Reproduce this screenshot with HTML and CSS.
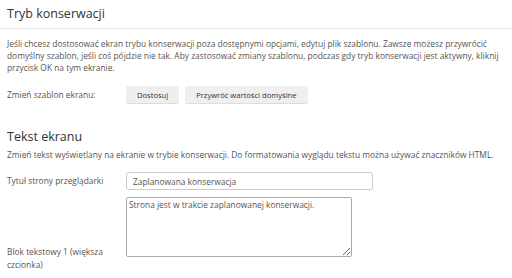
FILE: index.html
```html
<!DOCTYPE html>
<html>
<head>
  <title>Tryb konserwacji</title>
  <link rel="stylesheet" href="styles.css">
</head>
<body>

<div class="naglowek">
  <h1>Tryb konserwacji</h1>
</div>

<div class="sekcja">
  <p class="opis">Jeśli chcesz dostosować ekran trybu konserwacji poza dostępnymi opcjami, edytuj plik szablonu. Zawsze możesz przywrócić domyślny szablon, jeśli coś pójdzie nie tak. Aby zastosować zmiany szablonu, podczas gdy tryb konserwacji jest aktywny, kliknij przycisk OK na tym ekranie.</p>

  <div class="wiersz srodek">
    <label class="etykieta">Zmień szablon ekranu:</label>
    <div class="przyciski">
      <button class="przycisk">Dostosuj</button>
      <button class="przycisk">Przywróć wartości domyślne</button>
    </div>
  </div>
</div>

<div class="sekcja druga">
  <h2>Tekst ekranu</h2>
  <p class="opis krotki">Zmień tekst wyświetlany na ekranie w trybie konserwacji. Do formatowania wyglądu tekstu można używać znaczników HTML.</p>

  <div class="wiersz srodek">
    <label class="etykieta" for="tytul">Tytuł strony przeglądarki</label>
    <input type="text" id="tytul" class="pole" value="Zaplanowana konserwacja">
  </div>

  <div class="wiersz">
    <label class="etykieta nisko" for="blok1">Blok tekstowy 1 (większa czcionka)</label>
    <textarea id="blok1" class="obszar">Strona jest w trakcie zaplanowanej konserwacji.</textarea>
  </div>
</div>

</body>
</html>
```

FILE: styles.css
```css
body{
margin: 0;
background-color: white;
color: #555;
font-family: "Open Sans", "DejaVu Sans", sans-serif;
font-size: 8.4px;
}
.naglowek{
border-bottom: 1px solid #e8e8e8;
padding: 5px 7px 6px 7px;
}
h1{
margin: 0;
font-size: 12.5px;
font-weight: normal;
color: #333;
}
h2{
margin: 0 0 4px 0;
font-size: 12.5px;
font-weight: normal;
color: #333;
}
.sekcja{
padding: 9px 7px 0 7px;
}
.druga{
padding-top: 17px;
}
.opis{
margin: 0 0 12px 0;
line-height: 12px;
}
.krotki{
margin-bottom: 11px;
}
.wiersz{
display: flex;
margin-bottom: 7px;
}
.srodek{
align-items: center;
}
.etykieta{
width: 119px;
flex-shrink: 0;
line-height: 12.5px;
}
.nisko{
padding-top: 49px;
}
.przyciski{
display: flex;
gap: 6px;
}
.przycisk{
height: 18px;
padding: 0 11px;
border: 0;
border-bottom: 1px solid #ddd;
border-radius: 2px;
background-color: #efefef;
color: #333;
font-family: "Open Sans", "DejaVu Sans", sans-serif;
font-size: 7.6px;
}
.pole{
width: 247px;
height: 18px;
box-sizing: border-box;
margin: 0;
padding: 0 6px;
border: 1px solid #ccc;
border-radius: 3px;
color: #555;
font-family: "Open Sans", "DejaVu Sans", sans-serif;
font-size: 8.4px;
}
.obszar{
width: 226px;
height: 60px;
box-sizing: border-box;
margin: 0;
padding: 1px 2px;
border: 1px solid #aaa;
border-radius: 2px;
color: #555;
font-family: "Open Sans", "DejaVu Sans", sans-serif;
font-size: 8.4px;
}
```
